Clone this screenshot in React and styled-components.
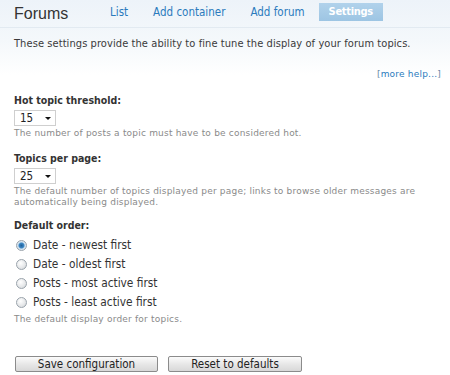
import React, { useState } from "react";
import styled, { createGlobalStyle } from "styled-components";

const GlobalStyle = createGlobalStyle`
    html, body {
        margin: 0;
        padding: 0;
    }
    body {
        width: 450px;
        height: 375px;
        overflow: hidden;
        background: linear-gradient(to bottom, #edf3f9 0px, #f4f8fb 40px, #ffffff 75px);
        font-family: "DejaVu Sans Condensed", "DejaVu Sans", sans-serif;
        color: #3a3a3a;
    }
`;

const Header = styled.div`
    display: flex;
    align-items: flex-start;
    height: 27px;
    padding-left: 14px;
    border-bottom: 1px solid #e2eaf1;
`;

const Title = styled.h1`
    margin: 5px 0 0;
    width: 85px;
    font-family: "Liberation Sans", Arial, sans-serif;
    font-size: 16px;
    line-height: 18px;
    font-weight: normal;
    color: #333;
`;

const Tabs = styled.nav`
    display: flex;
    gap: 3px;
    margin-top: 3px;
`;

const Tab = styled.a`
    display: block;
    padding: 2px ${(p) => (p.$active ? 10 : 11)}px;
    font-size: ${(p) => (p.$active ? 11 : 11.5)}px;
    line-height: 14px;
    letter-spacing: ${(p) => (p.$active ? -0.3 : 0)}px;
    text-decoration: none;
    color: ${(p) => (p.$active ? "#fff" : "#2b7bbd")};
    font-weight: ${(p) => (p.$active ? "bold" : "normal")};
    background: ${(p) => (p.$active ? "linear-gradient(to bottom, #b1d2eb, #9dc5e3)" : "none")};
`;

const Content = styled.div`
    padding: 0 9px 0 14px;
`;

const Intro = styled.p`
    margin: 9px 0 0;
    font-size: 11px;
    line-height: 14px;
    letter-spacing: 0.08px;
`;

const HelpRow = styled.div`
    display: flex;
    justify-content: flex-end;
    margin-top: 17px;
    font-family: "DejaVu Sans", sans-serif;
    font-size: 9px;
    line-height: 12px;
    letter-spacing: 0.2px;
    color: #6a8aa6;
`;

const HelpLink = styled.a`
    color: #2b7bbd;
    text-decoration: none;
`;

const Field = styled.div`
    margin-top: ${(p) => p.$top}px;
`;

const Label = styled.div`
    font-size: 10.5px;
    font-weight: bold;
    line-height: 14px;
    color: #333;
`;

const Select = styled.div`
    position: relative;
    display: flex;
    align-items: center;
    box-sizing: border-box;
    width: 42px;
    height: 16px;
    margin-top: 3px;
    padding-left: 5px;
    border: 1px solid #cfcfcf;
    background: #fff;
    font-size: 11.5px;
    color: #222;
`;

const Arrow = styled.span`
    position: absolute;
    right: 4px;
    top: 6px;
    width: 0;
    height: 0;
    border-left: 3px solid transparent;
    border-right: 3px solid transparent;
    border-top: 3px solid #111;
`;

const Help = styled.div`
    margin-top: ${(p) => p.$top}px;
    font-family: "DejaVu Sans", sans-serif;
    font-size: 9px;
    line-height: 11px;
    letter-spacing: 0.2px;
    color: #8a8a8a;
`;

const RadioList = styled.div`
    display: flex;
    flex-direction: column;
    gap: 5px;
    margin-top: 6px;
`;

const RadioRow = styled.label`
    display: flex;
    align-items: center;
    gap: 6px;
    padding-left: 2px;
    font-size: 11.8px;
    line-height: 14px;
    color: #333;
`;

const RadioDot = styled.span`
    box-sizing: border-box;
    width: 11px;
    height: 11px;
    border-radius: 50%;
    border: 1px solid #9aa3ab;
    background: ${(p) =>
        p.$checked
            ? "radial-gradient(circle, #1f5f99 0, #3d88c6 2.5px, #cfe1f0 3.5px, #e8eef3 100%)"
            : "radial-gradient(circle at 40% 35%, #ffffff 0, #e4e6e8 60%, #cdd0d3 100%)"};
`;

const Buttons = styled.div`
    display: flex;
    gap: 10px;
    margin-top: 31px;
    padding-left: 1px;
`;

const Button = styled.button`
    box-sizing: border-box;
    width: ${(p) => p.$width}px;
    height: 16px;
    padding: 0;
    border: 1px solid #8b8b8b;
    border-radius: 2px;
    background: linear-gradient(to bottom, #fbfbfb, #e6e6e6 55%, #d8d8d8);
    font-family: "DejaVu Sans Condensed", "DejaVu Sans", sans-serif;
    font-size: 11.5px;
    line-height: 14px;
    color: #222;
`;

const orders = [
    "Date - newest first",
    "Date - oldest first",
    "Posts - most active first",
    "Posts - least active first",
];

function App() {
    const [order, setOrder] = useState(0);

    return (
        <>
            <GlobalStyle />
            <Header>
                <Title>Forums</Title>
                <Tabs>
                    <Tab>List</Tab>
                    <Tab>Add container</Tab>
                    <Tab>Add forum</Tab>
                    <Tab $active>Settings</Tab>
                </Tabs>
            </Header>
            <Content>
                <Intro>These settings provide the ability to fine tune the display of your forum topics.</Intro>
                <HelpRow>
                    [<HelpLink>more help...</HelpLink>]
                </HelpRow>

                <Field $top={13}>
                    <Label>Hot topic threshold:</Label>
                    <Select>15<Arrow /></Select>
                    <Help $top={2}>The number of posts a topic must have to be considered hot.</Help>
                </Field>

                <Field $top={12}>
                    <Label>Topics per page:</Label>
                    <Select>25<Arrow /></Select>
                    <Help $top={2}>
                        The default number of topics displayed per page; links to browse older messages are
                        automatically being displayed.
                    </Help>
                </Field>

                <Field $top={10}>
                    <Label>Default order:</Label>
                    <RadioList>
                        {orders.map((o, i) => (
                            <RadioRow key={o} onClick={() => setOrder(i)}>
                                <RadioDot $checked={order === i} />
                                {o}
                            </RadioRow>
                        ))}
                    </RadioList>
                    <Help $top={5}>The default display order for topics.</Help>
                </Field>

                <Buttons>
                    <Button $width={143}>Save configuration</Button>
                    <Button $width={134}>Reset to defaults</Button>
                </Buttons>
            </Content>
        </>
    );
}

export default App;
